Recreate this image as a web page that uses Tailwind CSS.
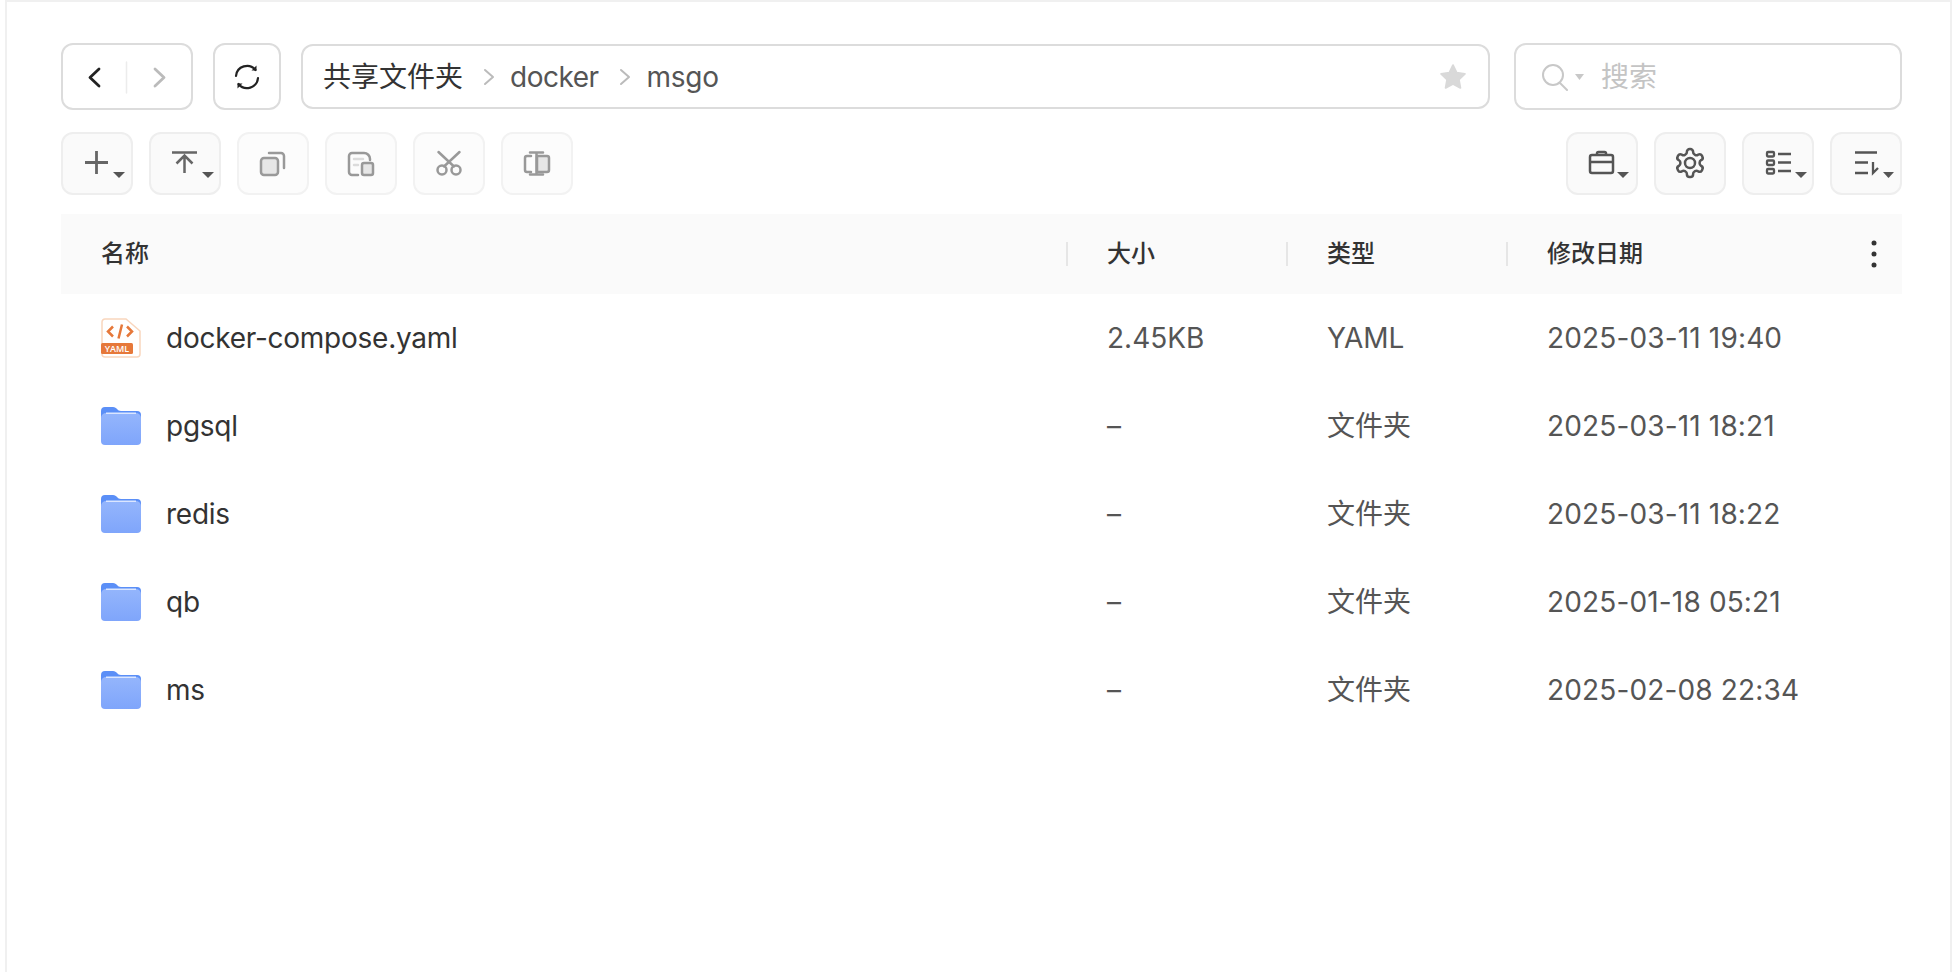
<!DOCTYPE html>
<html lang="zh-CN">
<head>
<meta charset="UTF-8">
<title>共享文件夹</title>
<script src="https://cdn.jsdelivr.net/npm/@tailwindcss/browser@4"></script>
</head>
<body class="bg-white overflow-hidden font-['Inter','Noto_Sans_CJK_SC',sans-serif]">
<svg class="absolute w-0 h-0"><defs><linearGradient id="folderFront" x1="0" y1="0" x2="0" y2="1"><stop offset="0" stop-color="#94b5fc"/><stop offset="1" stop-color="#7fa5fb"/></linearGradient></defs></svg>
<div class="ml-[5px] w-[1947px] h-[972px] border-l-2 border-r-2 border-t-2 border-[#f0f0f0] pt-[41px] pl-[54px] pr-[48px]">

  <!-- address bar -->
  <div class="flex items-center h-[67px]">
    <div class="relative w-[132px] h-[67px] shrink-0 rounded-[12px] border-2 border-[#dcdcdc] flex items-center">
      <svg class="w-[128px] h-[63px]" viewBox="0 0 128 63" fill="none" stroke-linecap="round" stroke-linejoin="round">
        <path d="M36 24l-9 8.500 9 8.500" stroke="#222" stroke-width="2.800"/>
        <path d="M63.500 17v31" stroke="#ececec" stroke-width="1.500"/>
        <path d="M92 24l9 8.500-9 8.500" stroke="#bbb" stroke-width="2.800"/>
      </svg>
    </div>
    <div class="ml-[20px] w-[68px] h-[67px] shrink-0 rounded-[12px] border-2 border-[#dcdcdc] flex items-center justify-center">
      <svg class="w-[28px] h-[28px]" viewBox="0 0 28 28" fill="none" stroke="#222" stroke-width="2.200" stroke-linecap="round" stroke-linejoin="round">
        <path d="M3 13a11 11 0 0 1 19.500-6"/>
        <path d="M25 15a11 11 0 0 1-19.500 6"/>
        <path d="M23.500 2.500v5h-5" stroke-width="0" fill="#222"/>
        <path d="M4.500 25.500v-5h5" stroke-width="0" fill="#222"/>
      </svg>
    </div>
    <div class="ml-[20px] flex-1 h-[65px] rounded-[12px] border-2 border-[#dcdcdc] flex items-center pl-[20px] pr-[20px] text-[28px]">
      <span class="text-[#333]">共享文件夹</span>
      <svg class="ml-[19px] w-[14px] h-[20px]" viewBox="0 0 14 20" fill="none" stroke="#bbb" stroke-width="2" stroke-linecap="round" stroke-linejoin="round"><path d="M3 3l8 7-8 7"/></svg>
      <span class="ml-[14px] text-[#555] tracking-[-0.5px]">docker</span>
      <svg class="ml-[19px] w-[14px] h-[20px]" viewBox="0 0 14 20" fill="none" stroke="#bbb" stroke-width="2" stroke-linecap="round" stroke-linejoin="round"><path d="M3 3l8 7-8 7"/></svg>
      <span class="ml-[15px] text-[#555] tracking-[-0.3px]">msgo</span>
      <svg class="ml-auto w-[30px] h-[30px]" viewBox="0 0 24 24" fill="#d9d9d9" stroke="#d9d9d9" stroke-width="1.500" stroke-linejoin="round"><path d="M12 2.500l2.900 6.100 6.600.9-4.800 4.600 1.200 6.600-5.900-3.200-5.900 3.200 1.200-6.600-4.800-4.600 6.600-.9z"/></svg>
    </div>
    <div class="ml-[24px] w-[388px] h-[67px] shrink-0 rounded-[12px] border-2 border-[#dcdcdc] flex items-center pl-[26px]">
      <svg class="w-[26px] h-[28px]" viewBox="0 0 26 28" fill="none" stroke="#c8c8c8" stroke-width="2" stroke-linecap="round"><circle cx="11" cy="12" r="10"/><path d="M18 20l7 7"/></svg>
      <svg class="ml-[7px] w-[9px] h-[6px]" viewBox="0 0 9 6" fill="#c8c8c8"><path d="M0 0h9L4.500 6z"/></svg>
      <span class="ml-[17px] text-[28px] text-[#c4c4c4]">搜索</span>
    </div>
  </div>

  <!-- toolbar -->
  <div class="flex items-center mt-[22px] h-[63px]">
    <div class="flex gap-[16px]">
      <button class="w-[72px] h-[63px] rounded-[12px] border-2 border-[#eeeeee] bg-[#fafafa]">
        <svg class="w-full h-full" viewBox="2 2 68 59" fill="none" stroke="#666" stroke-width="2.800">
          <path d="M24 30.500h23M35.500 19v23"/>
          <path d="M52 40h12l-6 6z" fill="#555" stroke="none"/>
        </svg>
      </button>
      <button class="w-[72px] h-[63px] rounded-[12px] border-2 border-[#eeeeee] bg-[#fafafa]">
        <svg class="w-full h-full" viewBox="2 2 68 59" fill="none" stroke="#666" stroke-width="2.500">
          <path d="M23 20.500h25M35.500 24v17M27.500 31.500l8-8 8 8"/>
          <path d="M53 40h12l-6 6z" fill="#555" stroke="none"/>
        </svg>
      </button>
      <button class="w-[72px] h-[63px] rounded-[12px] border-2 border-[#f2f2f2] bg-[#fcfcfc]">
        <svg class="w-full h-full" viewBox="2 2 68 59" fill="none" stroke="#999" stroke-width="2.500" stroke-linecap="round">
          <rect x="24" y="26" width="17" height="17" rx="3" fill="#e6e6e6"/>
          <path d="M32 21h12a3 3 0 0 1 3 3v12"/>
        </svg>
      </button>
      <button class="w-[72px] h-[63px] rounded-[12px] border-2 border-[#f2f2f2] bg-[#fcfcfc]">
        <svg class="w-full h-full" viewBox="2 2 68 59" fill="none" stroke="#999" stroke-width="2.500" stroke-linecap="round">
          <path d="M33 43h-6a3 3 0 0 1-3-3V24a3 3 0 0 1 3-3h12a6 6 0 0 1 6 6v1"/>
          <rect x="37" y="31" width="11" height="12" rx="2" fill="#e6e6e6"/>
          <path d="M29 27h9M29 33h4" stroke="#dcdcdc"/>
        </svg>
      </button>
      <button class="w-[72px] h-[63px] rounded-[12px] border-2 border-[#f2f2f2] bg-[#fcfcfc]">
        <svg class="w-full h-full" viewBox="2 2 68 59" fill="none" stroke="#999" stroke-width="2.500" stroke-linecap="round">
          <circle cx="29" cy="38" r="4.500"/>
          <circle cx="43" cy="38" r="4.500"/>
          <path d="M25.500 20l15.500 14.500M46.500 20L31 34.500"/>
        </svg>
      </button>
      <button class="w-[72px] h-[63px] rounded-[12px] border-2 border-[#f2f2f2] bg-[#fcfcfc]">
        <svg class="w-full h-full" viewBox="2 2 68 59" fill="none" stroke="#999" stroke-width="2.500" stroke-linecap="round" stroke-linejoin="round">
          <path d="M36 24h10a2 2 0 0 1 2 2v12a2 2 0 0 1-2 2H36z" fill="#e6e6e6"/>
          <path d="M30 24h-4a2 2 0 0 0-2 2v12a2 2 0 0 0 2 2h4"/>
          <path d="M29 20.500h13M35.500 20.500v22M29 42.500h13"/>
        </svg>
      </button>
    </div>
    <div class="ml-auto flex gap-[16px]">
      <button class="w-[72px] h-[63px] rounded-[12px] border-2 border-[#eeeeee] bg-[#fafafa]">
        <svg class="w-full h-full" viewBox="2 2 68 59" fill="none" stroke="#555" stroke-width="2.500" stroke-linejoin="round">
          <rect x="24" y="23" width="23" height="18" rx="2"/>
          <path d="M24 30h23M31 23v-1.500a1.500 1.500 0 0 1 1.500-1.500h6a1.500 1.500 0 0 1 1.500 1.500V23"/>
          <path d="M51 40h12l-6 6z" fill="#555" stroke="none"/>
        </svg>
      </button>
      <button class="w-[72px] h-[63px] rounded-[12px] border-2 border-[#eeeeee] bg-[#fafafa]">
        <svg class="w-full h-full" viewBox="2 2 68 59" fill="none" stroke="#555" stroke-width="2.500">
          <circle cx="36" cy="31" r="5"/>
          <g transform="translate(19.200 14.200) scale(1.400)" stroke-width="1.800">
            <path d="M12.220 2h-.44a2 2 0 0 0-2 2v.18a2 2 0 0 1-1 1.730l-.43.250a2 2 0 0 1-2 0l-.15-.08a2 2 0 0 0-2.730.730l-.22.380a2 2 0 0 0 .730 2.730l.15.100a2 2 0 0 1 1 1.720v.510a2 2 0 0 1-1 1.740l-.15.090a2 2 0 0 0-.730 2.730l.22.380a2 2 0 0 0 2.730.730l.15-.08a2 2 0 0 1 2 0l.43.250a2 2 0 0 1 1 1.730V20a2 2 0 0 0 2 2h.44a2 2 0 0 0 2-2v-.18a2 2 0 0 1 1-1.730l.43-.25a2 2 0 0 1 2 0l.15.08a2 2 0 0 0 2.730-.73l.22-.39a2 2 0 0 0-.73-2.730l-.15-.08a2 2 0 0 1-1-1.740v-.5a2 2 0 0 1 1-1.740l.15-.09a2 2 0 0 0 .73-2.730l-.22-.38a2 2 0 0 0-2.730-.73l-.15.08a2 2 0 0 1-2 0l-.43-.25a2 2 0 0 1-1-1.730V4a2 2 0 0 0-2-2z"/>
          </g>
        </svg>
      </button>
      <button class="w-[72px] h-[63px] rounded-[12px] border-2 border-[#eeeeee] bg-[#fafafa]">
        <svg class="w-full h-full" viewBox="2 2 68 59" fill="none" stroke="#555" stroke-width="2.300">
          <rect x="25" y="20" width="7" height="4.500" rx="1"/>
          <rect x="25" y="28.500" width="7" height="4.500" rx="1"/>
          <rect x="25" y="37" width="7" height="4.500" rx="1"/>
          <path d="M36 22h13M36 30.500h13M36 39h13"/>
          <path d="M53 40h12l-6 6z" fill="#555" stroke="none"/>
        </svg>
      </button>
      <button class="w-[72px] h-[63px] rounded-[12px] border-2 border-[#eeeeee] bg-[#fafafa]">
        <svg class="w-full h-full" viewBox="2 2 68 59" fill="none" stroke="#555" stroke-width="2.300">
          <path d="M25 20.500h22M25 30.500h13M25 41h13M43 30v11l5-5"/>
          <path d="M53 40h11l-5.500 6z" fill="#555" stroke="none"/>
        </svg>
      </button>
    </div>
  </div>

  <!-- file list -->
  <div class="mt-[19px]">
    <div class="grid grid-cols-[1005px_220px_220px_1fr] h-[80px] bg-[#fafafa] text-[24px] font-medium text-[#333]">
      <div class="flex items-center pl-[40px]">名称</div>
      <div class="flex items-center"><span class="w-[2px] h-[24px] bg-[#e6e6e6] mr-[39px]"></span>大小</div>
      <div class="flex items-center"><span class="w-[2px] h-[24px] bg-[#e6e6e6] mr-[39px]"></span>类型</div>
      <div class="relative flex items-center"><span class="w-[2px] h-[24px] bg-[#e6e6e6] mr-[39px]"></span>修改日期
        <svg class="absolute right-[24px] top-[26px] w-[8px] h-[28px]" viewBox="0 0 8 28" fill="#333"><circle cx="4" cy="3" r="2.500"/><circle cx="4" cy="14" r="2.500"/><circle cx="4" cy="25" r="2.500"/></svg>
      </div>
    </div>

    <div class="grid grid-cols-[1005px_220px_220px_1fr] h-[88px] items-center text-[28px] text-[#555]">
      <div class="flex items-center pl-[40px] text-[#333]">
        <svg class="w-[40px] h-[40px]" viewBox="0 0 40 40" fill="none">
          <path d="M4 1h21l14 12v23a3 3 0 0 1-3 3H4a3 3 0 0 1-3-3V4a3 3 0 0 1 3-3z" fill="#fff" stroke="#f9d6bd" stroke-width="1.500"/>
          <path d="M12 8.500l-5 5 5 5M26 8.500l5 5-5 5M21 6.500l-3.500 14" stroke="#e6783a" stroke-width="2.500"/>
          <rect x="0" y="25" width="32" height="11" rx="1.500" fill="#e6783a"/>
          <text x="16" y="34" text-anchor="middle" font-family="Open Sans" font-weight="600" font-size="9" fill="#fff">YAML</text>
        </svg>
        <span class="ml-[25px] tracking-[-0.25px]">docker-compose.yaml</span>
      </div>
      <div class="pl-[41px]">2.45KB</div>
      <div class="pl-[41px]">YAML</div>
      <div class="pl-[41px] tracking-[0.15px]">2025-03-11 19:40</div>
    </div>

    <div class="grid grid-cols-[1005px_220px_220px_1fr] h-[88px] items-center text-[28px] text-[#555]">
      <div class="flex items-center pl-[40px] text-[#333]">
        <svg class="w-[40px] h-[40px]" viewBox="0 0 40 40"><path d="M0 5a4 4 0 0 1 4-4h8c2 0 3 1 4 2s2 2 4 2h16a4 4 0 0 1 4 4v12H0z" fill="#5b8ff7"/><path d="M0 12a5 5 0 0 1 5-5h30a5 5 0 0 1 5 5v23a4 4 0 0 1-4 4H4a4 4 0 0 1-4-4z" fill="url(#folderFront)"/><path d="M5 6.500h30v1.500H5z" fill="#dbe6ff"/></svg>
        <span class="ml-[25px] tracking-[-0.25px]">pgsql</span>
      </div>
      <div class="pl-[41px]">–</div>
      <div class="pl-[41px]">文件夹</div>
      <div class="pl-[41px] tracking-[0.15px]">2025-03-11 18:21</div>
    </div>

    <div class="grid grid-cols-[1005px_220px_220px_1fr] h-[88px] items-center text-[28px] text-[#555]">
      <div class="flex items-center pl-[40px] text-[#333]">
        <svg class="w-[40px] h-[40px]" viewBox="0 0 40 40"><path d="M0 5a4 4 0 0 1 4-4h8c2 0 3 1 4 2s2 2 4 2h16a4 4 0 0 1 4 4v12H0z" fill="#5b8ff7"/><path d="M0 12a5 5 0 0 1 5-5h30a5 5 0 0 1 5 5v23a4 4 0 0 1-4 4H4a4 4 0 0 1-4-4z" fill="url(#folderFront)"/><path d="M5 6.500h30v1.500H5z" fill="#dbe6ff"/></svg>
        <span class="ml-[25px] tracking-[-0.25px]">redis</span>
      </div>
      <div class="pl-[41px]">–</div>
      <div class="pl-[41px]">文件夹</div>
      <div class="pl-[41px] tracking-[0.15px]">2025-03-11 18:22</div>
    </div>

    <div class="grid grid-cols-[1005px_220px_220px_1fr] h-[88px] items-center text-[28px] text-[#555]">
      <div class="flex items-center pl-[40px] text-[#333]">
        <svg class="w-[40px] h-[40px]" viewBox="0 0 40 40"><path d="M0 5a4 4 0 0 1 4-4h8c2 0 3 1 4 2s2 2 4 2h16a4 4 0 0 1 4 4v12H0z" fill="#5b8ff7"/><path d="M0 12a5 5 0 0 1 5-5h30a5 5 0 0 1 5 5v23a4 4 0 0 1-4 4H4a4 4 0 0 1-4-4z" fill="url(#folderFront)"/><path d="M5 6.500h30v1.500H5z" fill="#dbe6ff"/></svg>
        <span class="ml-[25px] tracking-[-0.25px]">qb</span>
      </div>
      <div class="pl-[41px]">–</div>
      <div class="pl-[41px]">文件夹</div>
      <div class="pl-[41px] tracking-[0.15px]">2025-01-18 05:21</div>
    </div>

    <div class="grid grid-cols-[1005px_220px_220px_1fr] h-[88px] items-center text-[28px] text-[#555]">
      <div class="flex items-center pl-[40px] text-[#333]">
        <svg class="w-[40px] h-[40px]" viewBox="0 0 40 40"><path d="M0 5a4 4 0 0 1 4-4h8c2 0 3 1 4 2s2 2 4 2h16a4 4 0 0 1 4 4v12H0z" fill="#5b8ff7"/><path d="M0 12a5 5 0 0 1 5-5h30a5 5 0 0 1 5 5v23a4 4 0 0 1-4 4H4a4 4 0 0 1-4-4z" fill="url(#folderFront)"/><path d="M5 6.500h30v1.500H5z" fill="#dbe6ff"/></svg>
        <span class="ml-[25px] tracking-[-0.25px]">ms</span>
      </div>
      <div class="pl-[41px]">–</div>
      <div class="pl-[41px]">文件夹</div>
      <div class="pl-[41px] tracking-[0.15px]">2025-02-08 22:34</div>
    </div>
  </div>
</div>
</body>
</html>
